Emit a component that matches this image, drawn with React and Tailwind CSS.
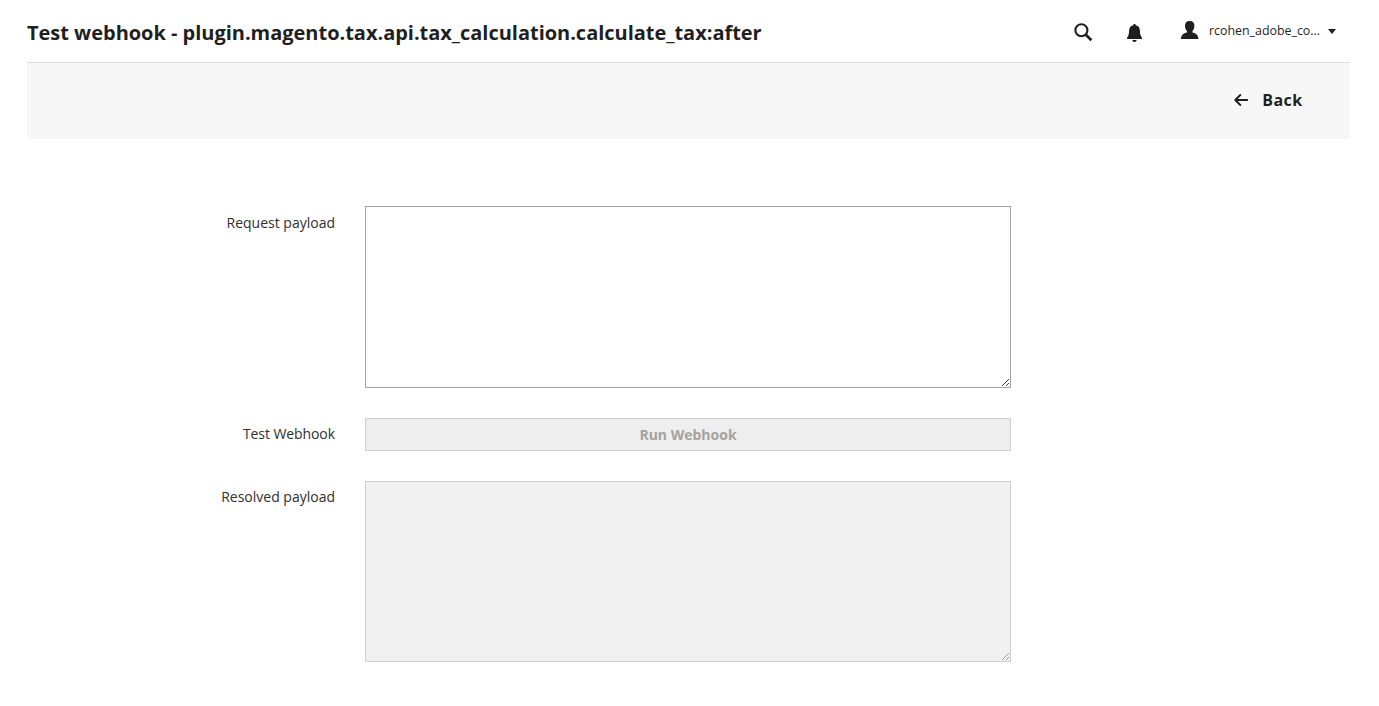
function Grip({ color }) {
  return (
    <svg className="absolute right-0 bottom-0 size-[10px]" viewBox="0 0 10 10" fill={color} shapeRendering="crispEdges">
      <path d="M7 1h1v1h-1zM6 2h1v1h-1zM5 3h1v1h-1zM4 4h1v1h-1zM3 5h1v1h-1zM2 6h1v1h-1zM1 7h1v1h-1zM7 5h1v1h-1zM6 6h1v1h-1zM5 7h1v1h-1z" />
    </svg>
  );
}

function Row({ label, className, children }) {
  return (
    <div className="flex items-start">
      <label className={`w-[335px] shrink-0 text-right text-[14px] leading-[20px] text-[#303030] ${className}`}>{label}</label>
      <div className="relative ml-[30px] w-[646px] shrink-0">{children}</div>
    </div>
  );
}

export default function App() {
  return (
    <div className="h-[706px] w-[1379px] overflow-hidden bg-white font-['Open_Sans','Noto_Sans',sans-serif] text-[#1f1f1f]">
      <header className="mx-[27px] flex h-[62px] w-[1323px] items-start">
        <h1 className="mt-[19px] whitespace-nowrap text-[20px] leading-[28px] font-bold tracking-[-0.022px]">
          Test webhook - plugin.magento.tax.api.tax_calculation.calculate_tax:after
        </h1>
        <div className="mr-[14px] ml-auto flex items-start">
          <svg className="mt-[23px] size-[19px]" viewBox="0 0 19 19" fill="none" stroke="currentColor">
            <circle cx="7.4" cy="7.3" r="6" strokeWidth="2.1" />
            <path d="M11.6 11.5 L17.4 17.3" strokeWidth="2.7" />
          </svg>
          <svg className="mt-[23px] ml-[33px] h-[20px] w-[17px]" viewBox="0 0 17 20" fill="currentColor">
            <path d="M8.5 1 C9.4 1 9.8 1.6 9.8 2.3 C12.6 2.9 13.8 4.8 13.9 7.6 C14 11.3 14.5 13.2 15.9 14.6 V16 H1.1 V14.6 C2.5 13.2 3 11.3 3.1 7.6 C3.2 4.8 4.4 2.9 7.2 2.3 C7.2 1.6 7.6 1 8.5 1 Z M6.3 17 H10.7 C10.3 18.4 9.5 19 8.5 19 S6.7 18.4 6.3 17 Z" />
          </svg>
          <svg className="mt-[20px] ml-[37px] h-[20px] w-[20px]" viewBox="0 0 20 20" fill="currentColor">
            <path d="M9.7 1 C12.8 1 14.5 2.9 14.4 6 C14.3 8.4 13.5 10 12.4 11.2 V12.4 C15.7 13.3 18.3 14.7 18.5 19 H.9 C1.1 14.7 3.7 13.3 7 12.4 V11.2 C5.9 10 5.1 8.4 5 6 C4.9 2.9 6.6 1 9.7 1 Z" />
          </svg>
          <span className="mt-[21px] ml-[9px] w-[112px] whitespace-nowrap text-[12.4px] leading-[20px]">rcohen_adobe_co...</span>
          <svg className="mt-[29px] ml-[7px] h-[5px] w-[8px]" viewBox="0 0 8 5" fill="currentColor">
            <path d="M0 0 H8 L4 5 Z" />
          </svg>
        </div>
      </header>
      <div className="mx-[27px] flex h-[77px] w-[1323px] items-center justify-end border-t border-[#dddddd] bg-[#f7f7f7] pr-[47.5px] pb-[2px]">
        <button className="flex items-center text-[16px] leading-[22px] font-bold tracking-[0.4px]">
          <svg className="mr-[13px] h-[14px] w-[16px]" viewBox="0 0 16 14" fill="none" stroke="currentColor" strokeWidth="1.9" strokeLinecap="round" strokeLinejoin="round">
            <path d="M14.3 7 H2.5 M7.3 2 L2.3 7 L7.3 12" />
          </svg>
          Back
        </button>
      </div>
      <main className="mt-[67px] flex flex-col gap-[30px]">
        <Row label="Request payload" className="mt-[7px]">
          <textarea className="block h-[182px] w-full resize-none border border-[#a3a3a3] bg-white" />
          <Grip color="#444444" />
        </Row>
        <Row label="Test Webhook" className="mt-[6px] tracking-[-0.08px]">
          <button disabled className="block h-[33px] w-full border border-[#cfcfcf] bg-[#eeeeee] text-[14px] leading-[20px] font-bold text-[#a5a29f]">
            Run Webhook
          </button>
        </Row>
        <Row label="Resolved payload" className="mt-[6px]">
          <textarea disabled className="block h-[181px] w-full resize-none border border-[#cfcfcf] bg-[#f1f1f1]" />
          <Grip color="#999999" />
        </Row>
      </main>
    </div>
  );
}
